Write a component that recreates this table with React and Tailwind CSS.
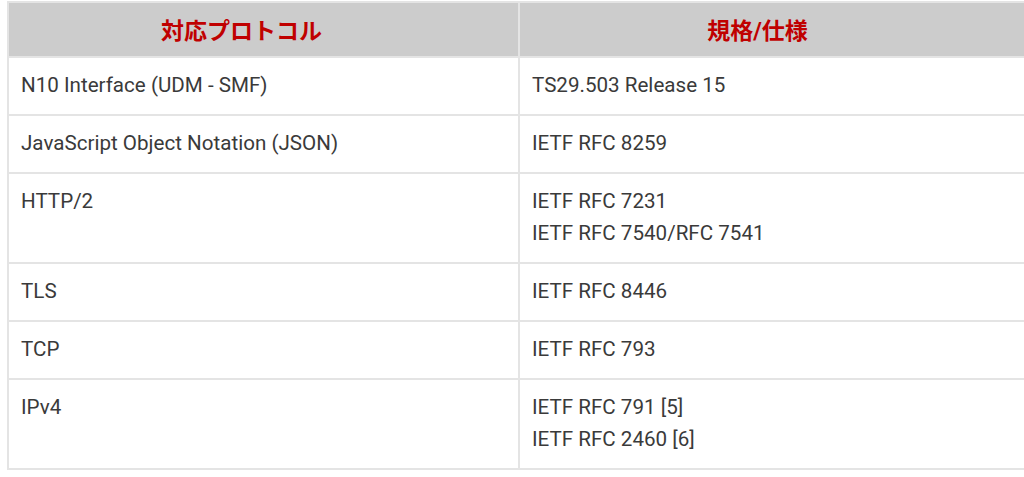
const rows = [
  { protocol: "N10 Interface (UDM - SMF)", specs: ["TS29.503 Release 15"] },
  { protocol: "JavaScript Object Notation (JSON)", specs: ["IETF RFC 8259"] },
  { protocol: "HTTP/2", specs: ["IETF RFC 7231", "IETF RFC 7540/RFC 7541"] },
  { protocol: "TLS", specs: ["IETF RFC 8446"] },
  { protocol: "TCP", specs: ["IETF RFC 793"] },
  { protocol: "IPv4", specs: ["IETF RFC 791 [5]", "IETF RFC 2460 [6]"] },
];

function App() {
  return (
    <div className="w-full overflow-hidden bg-white pl-[7px] pt-px">
      <table
        className="w-[1034px] table-fixed border-collapse text-[20.6px] text-[#3a3a3a]"
        style={{ fontFamily: "Roboto, 'Noto Sans CJK JP', sans-serif" }}
      >
        <colgroup>
          <col className="w-[511px]" />
          <col />
        </colgroup>
        <thead>
          <tr className="h-[55px] bg-[#cccccc]">
            <th className="border-2 border-[#e4e4e4] pr-[44px] pt-[5px] text-center text-[23px] font-bold text-[#c00000]">
              対応プロトコル
            </th>
            <th className="border-2 border-[#e4e4e4] pr-[44px] pt-[5px] text-center text-[23px] font-bold text-[#c00000]">
              規格/仕様
            </th>
          </tr>
        </thead>
        <tbody>
          {rows.map((row) => (
            <tr key={row.protocol}>
              <td className="border-2 border-[#e4e4e4] px-3 pt-[11px] pb-[13px] align-top leading-8">
                {row.protocol}
              </td>
              <td className="border-2 border-[#e4e4e4] px-3 pt-[11px] pb-[13px] align-top leading-8">
                {row.specs.map((s) => (
                  <div key={s}>{s}</div>
                ))}
              </td>
            </tr>
          ))}
        </tbody>
      </table>
    </div>
  );
}

export default App;
